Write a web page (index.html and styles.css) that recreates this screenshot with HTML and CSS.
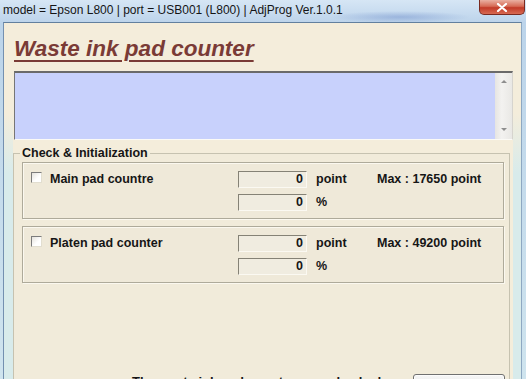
FILE: index.html
```html
<!DOCTYPE html>
<html lang="en">
<head>
  <meta charset="UTF-8">
  <meta name="viewport" content="width=device-width, initial-scale=1.0">
  <title>Waste ink pad counter</title>
  <link rel="stylesheet" href="styles.css">
</head>
<body>

  <div class="window">

    <!-- Title bar -->
    <div class="titlebar">
      <span class="title">model = Epson L800 | port = USB001 (L800) | AdjProg Ver.1.0.1</span>
      <div class="close-btn">
        <svg width="12" height="9" viewBox="0 0 12 9">
          <path d="M2 1 L10 8 M10 1 L2 8" stroke="#fff" stroke-width="2.2" stroke-linecap="round"/>
        </svg>
      </div>
    </div>

    <!-- Client area -->
    <div class="client">
      <h1 class="heading">Waste ink pad counter</h1>

      <div class="log-box">
        <div class="log-area"></div>
        <div class="scrollbar">
          <span class="arrow arrow-up"></span>
          <span class="arrow arrow-down"></span>
        </div>
      </div>

      <fieldset class="group">
        <legend>Check &amp; Initialization</legend>

        <div class="pad-panel">
          <div class="pad-name"><span class="checkbox"></span>Main pad countre</div>
          <div class="field">0</div>
          <div class="unit">point</div>
          <div class="max">Max : 17650 point</div>
          <div></div>
          <div class="field">0</div>
          <div class="unit">%</div>
          <div></div>
        </div>

        <div class="pad-panel">
          <div class="pad-name"><span class="checkbox"></span>Platen pad counter</div>
          <div class="field">0</div>
          <div class="unit">point</div>
          <div class="max">Max : 49200 point</div>
          <div></div>
          <div class="field">0</div>
          <div class="unit">%</div>
          <div></div>
        </div>

        <div class="footer">
          <span class="hint">The waste ink pad counters are checked</span>
          <button class="btn">Check</button>
        </div>
      </fieldset>
    </div>

  </div>

</body>
</html>
```

FILE: styles.css
```css
* {
  margin: 0;
  padding: 0;
  box-sizing: border-box;
}

html,
body {
  width: 526px;
  height: 379px;
  overflow: hidden;
}

body {
  font-family: "Liberation Sans", Arial, sans-serif;
  background-color: #c3d9ee;
}

/* Window frame */
.window {
  width: 526px;
  height: 379px;
  display: flex;
  flex-direction: column;
  background: linear-gradient(#d3e4f4, #bcd4ea 22px, #cfe4ee);
  overflow: hidden;
}

.titlebar {
  height: 22px;
  flex-shrink: 0;
  display: flex;
  align-items: flex-start;
  padding: 0 1px 0 3px;
  background:
    radial-gradient(ellipse 70px 6px at 400px 17px, rgba(80, 115, 190, 0.35), transparent),
    linear-gradient(#d6e6f5, #bdd4eb);
}

.title {
  font-size: 12px;
  line-height: 21px;
  color: #151515;
  white-space: nowrap;
}

.close-btn {
  margin-left: auto;
  width: 46px;
  height: 15px;
  flex-shrink: 0;
  border: 1px solid #7a2a20;
  border-top: none;
  border-radius: 0 0 5px 5px;
  background: linear-gradient(#eab0a2, #d66a55 45%, #c23a28 55%, #d86a52);
  display: flex;
  align-items: center;
  justify-content: center;
}

/* Client area */
.client {
  width: 519px;
  flex-grow: 1;
  margin-left: 3px;
  padding: 0 8px 0 9px;
  border-top: 1px solid #62809e;
  border-left: 1px solid #7490b0;
  border-right: 1px solid #8ea8c2;
  background:
    linear-gradient(#f4eddb 90px, #d8ebeb 150px) left top / 9px 100% no-repeat,
    linear-gradient(#f4eddb 90px, #d8ebeb 150px) right top / 8px 100% no-repeat,
    #f4eddb;
}

.heading {
  margin: 13px 0 0 1px;
  font-size: 22.5px;
  line-height: 26px;
  font-weight: bold;
  font-style: italic;
  color: #7a3b36;
  text-decoration: underline;
  text-decoration-thickness: 2px;
  text-underline-offset: 4px;
}

/* Log box with scrollbar */
.log-box {
  display: flex;
  width: 499px;
  height: 69px;
  margin: 9px 0 0 1px;
  border-top: 2px solid #6a6a6a;
  border-left: 1px solid #767676;
  border-right: 1px solid #d6d4ce;
  border-bottom: 1px solid #fbfaf6;
}

.log-area {
  flex-grow: 1;
  background-color: #c8d1fc;
}

.scrollbar {
  width: 17px;
  background: linear-gradient(to right, #e6e5e2, #f3f2f0 40%, #e9e8e5);
  display: flex;
  flex-direction: column;
  justify-content: space-between;
  align-items: center;
  padding: 7px 0 8px;
}

.arrow {
  width: 0;
  height: 0;
  border-left: 3px solid transparent;
  border-right: 3px solid transparent;
}

.arrow-up {
  border-bottom: 3px solid #8e8e8e;
}

.arrow-down {
  border-top: 3px solid #8e8e8e;
}

/* Check & Initialization group */
.group {
  width: 497px;
  min-width: 0;
  height: 400px;
  margin-top: 6px;
  padding: 0 5px 0 8px;
  border: 1px solid #c6c2b0;
  background-color: #f1ebda;
}

.group legend {
  margin-left: -2px;
  padding: 0 2px;
  font-size: 12.5px;
  line-height: 14px;
  font-weight: bold;
  color: #161616;
}

.pad-panel {
  display: grid;
  grid-template-columns: 215px 69px 70px 1fr;
  grid-template-rows: 17px 17px;
  row-gap: 6px;
  padding: 8px 0 7px;
  margin-top: 2px;
  border: 1px solid #aeaa9a;
  box-shadow: inset 1px 1px 0 #fbf8ef, 1px 1px 0 #fbf8ef;
  background-color: #efe9d9;
  font-size: 12.5px;
  line-height: 17px;
  font-weight: bold;
  color: #161616;
}

.pad-panel + .pad-panel {
  margin-top: 7px;
}

.pad-name {
  display: flex;
  align-items: flex-start;
}

.checkbox {
  width: 11px;
  height: 11px;
  margin: 1px 8px 0 8px;
  border-top: 1px solid #7c7c7c;
  border-left: 1px solid #7c7c7c;
  border-right: 1px solid #e2ded0;
  border-bottom: 1px solid #e2ded0;
  background: linear-gradient(135deg, #e4e2dc, #ffffff 60%);
}

.field {
  padding-right: 3px;
  text-align: right;
  line-height: 15px;
  border-top: 1px solid #858276;
  border-left: 1px solid #858276;
  border-right: 1px solid #fbf9f2;
  border-bottom: 1px solid #fbf9f2;
  background-color: #f0ece0;
}

.unit {
  padding-left: 9px;
}

/* Footer with hint and button */
.footer {
  display: flex;
  align-items: flex-start;
  margin-top: 91px;
}

.hint {
  margin-left: 110px;
  font-size: 13px;
  line-height: 16px;
  font-weight: bold;
  color: #161616;
  white-space: nowrap;
}

.btn {
  margin-left: auto;
  margin-right: -1px;
  width: 92px;
  height: 23px;
  flex-shrink: 0;
  border: 1px solid #707070;
  border-radius: 3px;
  background: linear-gradient(#f6f6f6, #e2e2e2);
  box-shadow: inset 0 0 0 1px #fcfcfc;
  font-family: "Liberation Sans", Arial, sans-serif;
  font-size: 13px;
  font-weight: bold;
  color: #161616;
}
```
